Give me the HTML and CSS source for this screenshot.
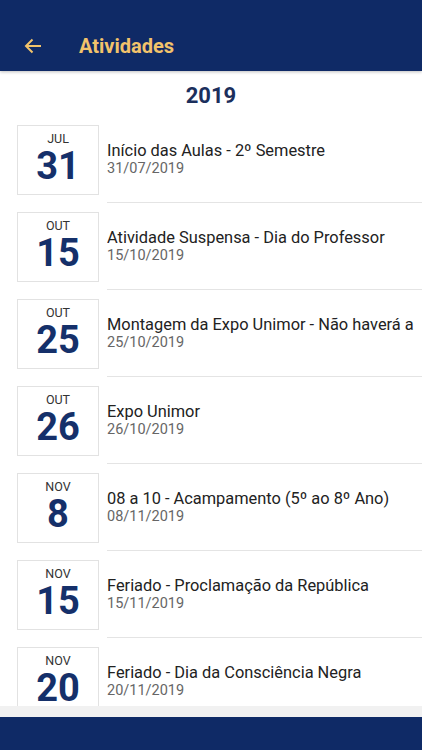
FILE: index.html
```html
<!DOCTYPE html>
<html>
<head>
    <title>Atividades</title>
    <link rel="stylesheet" href="styles.css">
</head>
<body>
<div class="header">
    <svg class="back" width="18" height="16" viewBox="0 0 18 16">
        <path d="M17 8H2M8.5 1.5L2 8l6.5 6.5" fill="none" stroke="#f2c36b" stroke-width="2"/>
    </svg>
    <h1>Atividades</h1>
</div>
<div class="content">
    <h2 class="year">2019</h2>
    <div class="row">
        <div class="datebox"><span class="month">JUL</span><span class="day">31</span></div>
        <div class="info"><div class="title">Início das Aulas - 2º Semestre</div><div class="date">31/07/2019</div></div>
    </div>
    <div class="row">
        <div class="datebox"><span class="month">OUT</span><span class="day">15</span></div>
        <div class="info"><div class="title">Atividade Suspensa - Dia do Professor</div><div class="date">15/10/2019</div></div>
    </div>
    <div class="row">
        <div class="datebox"><span class="month">OUT</span><span class="day">25</span></div>
        <div class="info"><div class="title">Montagem da Expo Unimor - Não haverá aula</div><div class="date">25/10/2019</div></div>
    </div>
    <div class="row">
        <div class="datebox"><span class="month">OUT</span><span class="day">26</span></div>
        <div class="info"><div class="title">Expo Unimor</div><div class="date">26/10/2019</div></div>
    </div>
    <div class="row">
        <div class="datebox"><span class="month">NOV</span><span class="day">8</span></div>
        <div class="info"><div class="title">08 a 10 - Acampamento (5º ao 8º Ano)</div><div class="date">08/11/2019</div></div>
    </div>
    <div class="row">
        <div class="datebox"><span class="month">NOV</span><span class="day">15</span></div>
        <div class="info"><div class="title">Feriado - Proclamação da República</div><div class="date">15/11/2019</div></div>
    </div>
    <div class="row">
        <div class="datebox"><span class="month">NOV</span><span class="day">20</span></div>
        <div class="info"><div class="title">Feriado - Dia da Consciência Negra</div><div class="date">20/11/2019</div></div>
    </div>
</div>
<div class="bottom"></div>
</body>
</html>
```
FILE: styles.css
```css
body {
    font-family: Roboto, "Liberation Sans", sans-serif;
    margin: 0;
    height: 100vh;
    display: flex;
    flex-direction: column;
    background: #fff;
    overflow: hidden;
}
.header {
    height: 71px;
    flex-shrink: 0;
    background: #0f2a66;
    display: flex;
    align-items: center;
    padding-left: 24px;
    padding-top: 21px;
    box-sizing: border-box;
    box-shadow: 0 1px 3px rgba(0, 0, 0, 0.25);
}
.header h1 {
    margin: 0 0 0 37px;
    font-size: 20px;
    font-weight: bold;
    color: #f2c36b;
}
.content {
    flex: 1;
    overflow: hidden;
}
.year {
    margin: 0;
    height: 47px;
    line-height: 50px;
    text-align: center;
    font-size: 22px;
    font-weight: bold;
    color: #1b2f5c;
}
.row {
    display: flex;
    height: 87px;
    padding-left: 17px;
}
.datebox {
    width: 82px;
    height: 70px;
    margin-top: 7px;
    box-sizing: border-box;
    border: 1px solid #e2e2e2;
    padding-top: 6px;
    display: flex;
    flex-direction: column;
    align-items: center;
    flex-shrink: 0;
}
.month {
    font-size: 12.5px;
    line-height: 14px;
    color: #333;
}
.day {
    font-size: 38px;
    line-height: 40px;
    font-weight: bold;
    color: #15306a;
}
.info {
    flex: 1;
    min-width: 0;
    margin-left: 8px;
    height: 85px;
    box-sizing: border-box;
    border-bottom: 1px solid #e4e4e4;
    padding-top: 24px;
    padding-right: 8px;
}
.title {
    font-size: 16.4px;
    line-height: 18px;
    color: #222;
    white-space: nowrap;
    overflow: hidden;
}
.date {
    font-size: 14.5px;
    line-height: 18px;
    color: #666;
}
.bottom {
    height: 44px;
    flex-shrink: 0;
    box-sizing: border-box;
    border-top: 11px solid #f1f1f1;
    background: #0f2a66;
}
```
